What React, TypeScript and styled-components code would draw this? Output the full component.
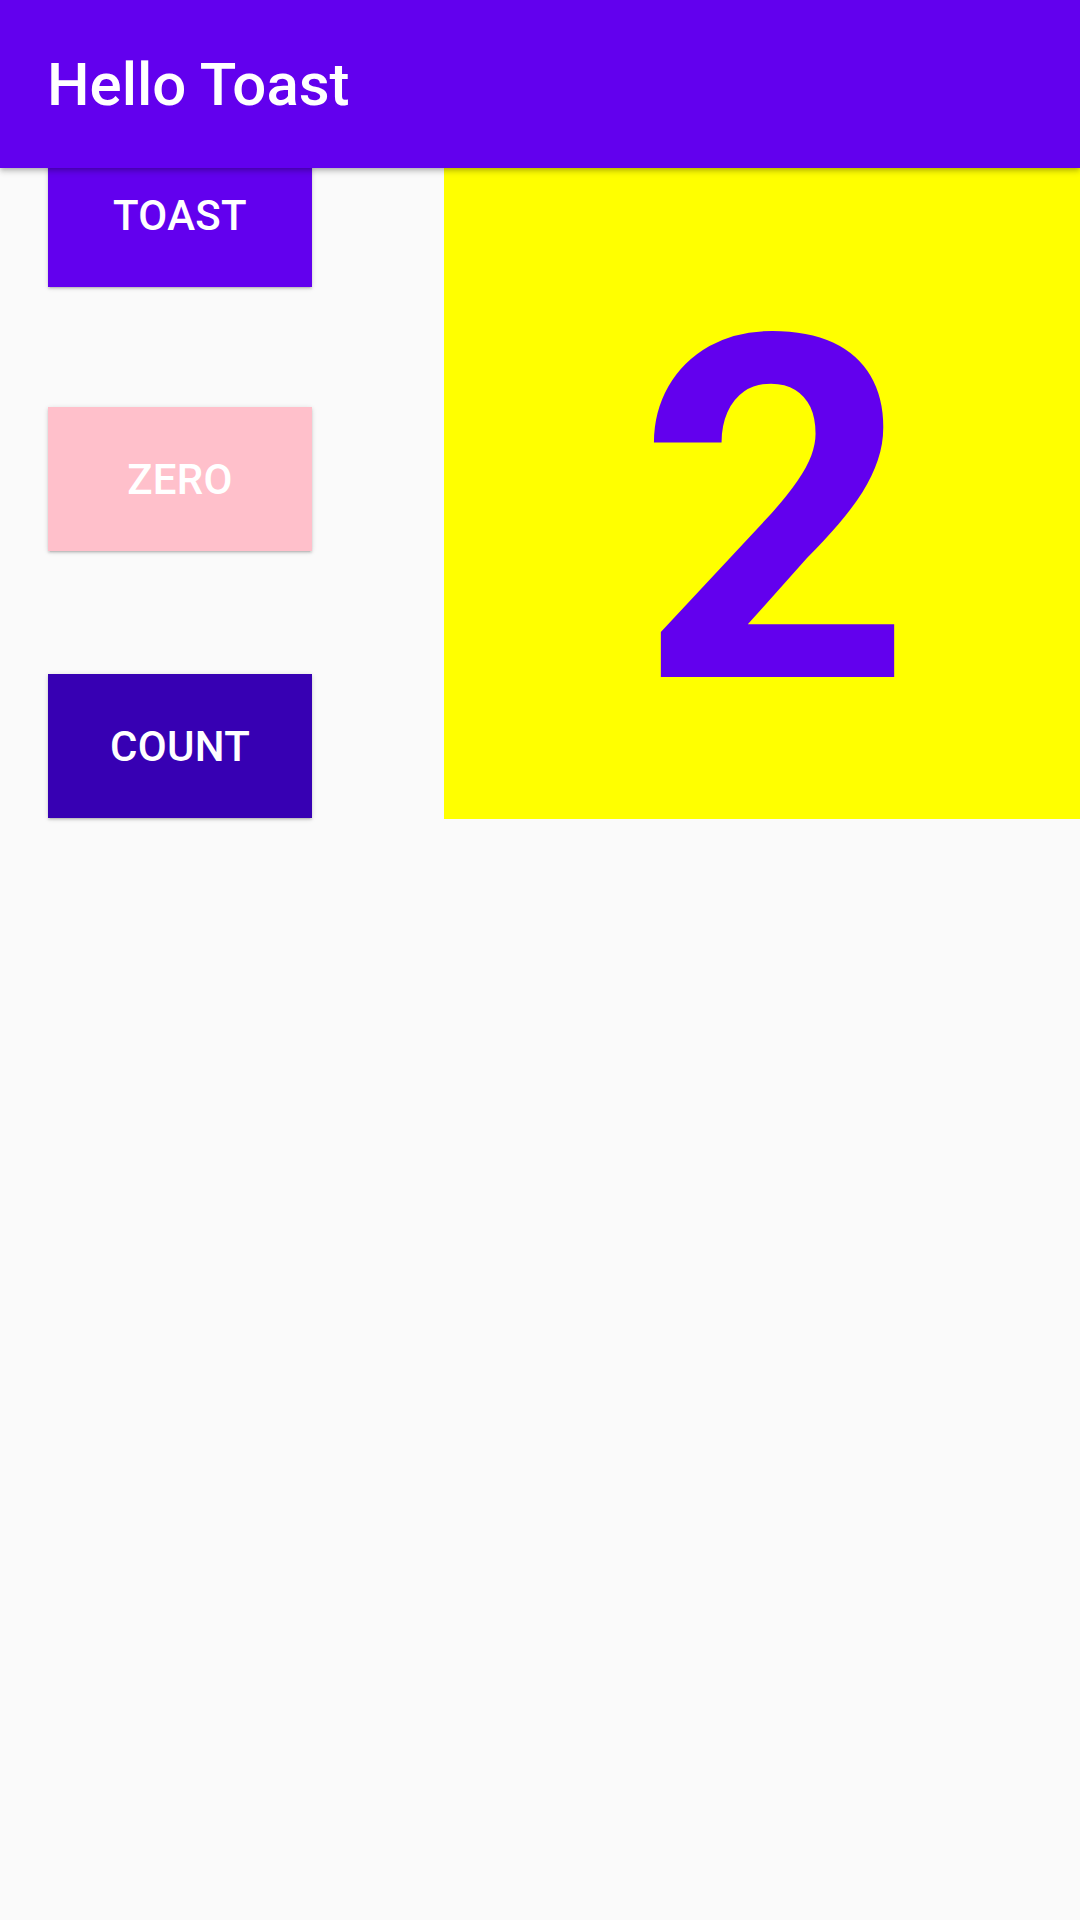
import React from "react";
import styled, { createGlobalStyle } from "styled-components";

const GlobalStyle = createGlobalStyle`
  html, body {
    margin: 0;
    padding: 0;
    background: #fafafa;
  }
  body {
    width: 1080px;
    height: 1920px;
    overflow: hidden;
    font-family: Roboto, "Noto Sans", "Liberation Sans", sans-serif;
  }
`;

const Screen = styled.div`
  position: relative;
  width: 1080px;
  height: 1920px;
  background: #fafafa;
`;

const AppBar = styled.header`
  position: absolute;
  top: 0;
  left: 0;
  right: 0;
  height: 168px;
  z-index: 2;
  display: flex;
  align-items: center;
  padding-left: 47px;
  box-sizing: border-box;
  background: #6200ee;
  box-shadow: 0 4px 5px rgba(0, 0, 0, 0.12), 0 1px 10px rgba(0, 0, 0, 0.1),
    0 2px 4px -1px rgba(0, 0, 0, 0.16);
`;

const Title = styled.h1`
  margin: 0;
  font-family: Roboto, "Noto Sans", sans-serif;
  font-weight: 500;
  font-size: 60px;
  color: #ffffff;
  letter-spacing: 0;
`;

const Content = styled.main`
  display: flex;
  align-items: flex-start;
`;

const ButtonColumn = styled.div`
  display: flex;
  flex-direction: column;
  padding: 143px 0 0 48px;
  width: 264px;
`;

const ActionButton = styled.button<{ $bg: string; $top: number }>`
  width: 264px;
  height: 144px;
  margin-top: ${(p) => p.$top}px;
  border: none;
  border-radius: 0;
  padding: 0;
  background: ${(p) => p.$bg};
  color: #ffffff;
  font-family: Roboto, "Noto Sans", sans-serif;
  font-weight: 500;
  font-size: 42px;
  letter-spacing: 0.3px;
  text-transform: uppercase;
  box-shadow: 0 2px 2px rgba(0, 0, 0, 0.1), 0 3px 1px -2px rgba(0, 0, 0, 0.08),
    0 1px 5px rgba(0, 0, 0, 0.14);
  cursor: pointer;
`;

const CountPanel = styled.section`
  flex: 1;
  margin-left: 132px;
  height: 819px;
  background: #ffff00;
  display: flex;
  align-items: flex-end;
  justify-content: center;
  box-sizing: border-box;
  padding: 0 0 25px 26px;
`;

const CountText = styled.div`
  font-family: Roboto, "Noto Sans", sans-serif;
  font-weight: 700;
  font-size: 480px;
  line-height: normal;
  color: #6200ee;
`;

export default function App() {
  return (
    <Screen>
      <GlobalStyle />
      <AppBar>
        <Title>Hello Toast</Title>
      </AppBar>
      <Content>
        <ButtonColumn>
          <ActionButton $bg="#6200ee" $top={0}>Toast</ActionButton>
          <ActionButton $bg="#ffc0cb" $top={120}>Zero</ActionButton>
          <ActionButton $bg="#3700b3" $top={123}>Count</ActionButton>
        </ButtonColumn>
        <CountPanel>
          <CountText>2</CountText>
        </CountPanel>
      </Content>
    </Screen>
  );
}
